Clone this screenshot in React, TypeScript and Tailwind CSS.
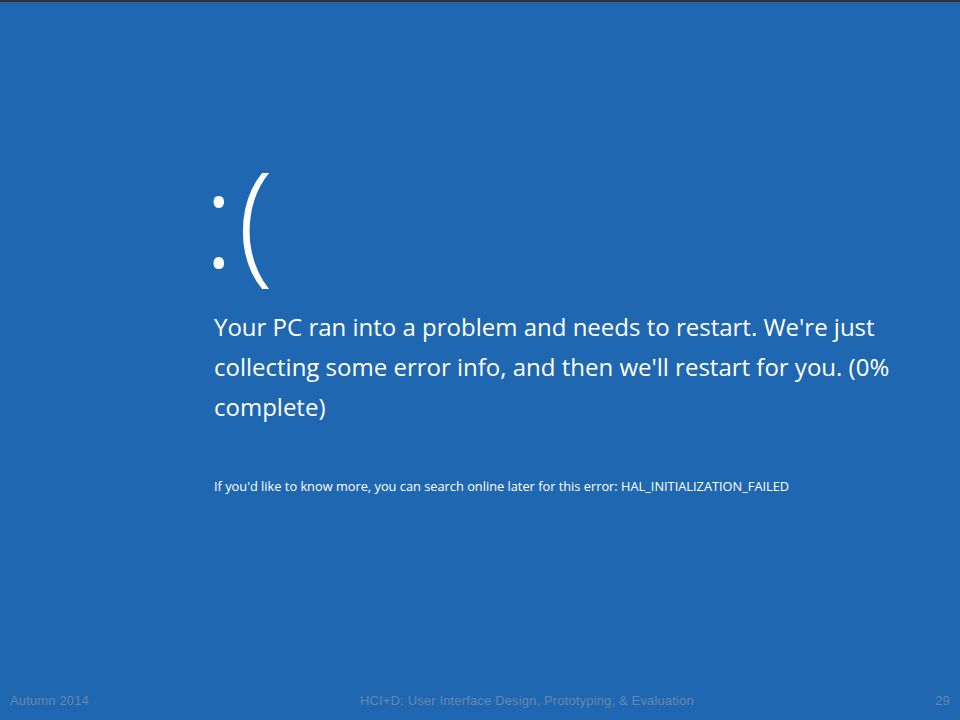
export default function App() {
  return (
    <div className="flex h-[720px] w-[960px] flex-col overflow-hidden bg-[#2067b2]">
      <div className="h-[2px] bg-[#333333]" />
      <main className="flex flex-1 flex-col pl-[214px] pt-[145px] font-['Open_Sans','Noto_Sans',sans-serif] text-white">
        <div className="-ml-[11px] text-[132px] font-light leading-[140px] tracking-[3px]">:(</div>
        <p className="mt-[20px] w-[700px] text-[24px] leading-[40px]">
          Your PC ran into a problem and needs to restart. We're just collecting some error info, and then we'll restart for you. (0% complete)
        </p>
        <p className="mt-[49px] text-[12.8px] leading-[20px]">
          If you'd like to know more, you can search online later for this error: HAL_INITIALIZATION_FAILED
        </p>
      </main>
      <footer className="flex h-[30px] items-start px-[10px] pt-[3px] font-['Liberation_Sans',Arial,sans-serif] text-[13px] leading-[16px] tracking-[0.15px] text-[#6587b0]">
        <span className="w-[350px]">Autumn 2014</span>
        <span>HCI+D: User Interface Design, Prototyping, &amp; Evaluation</span>
        <span className="ml-auto">29</span>
      </footer>
    </div>
  );
}
